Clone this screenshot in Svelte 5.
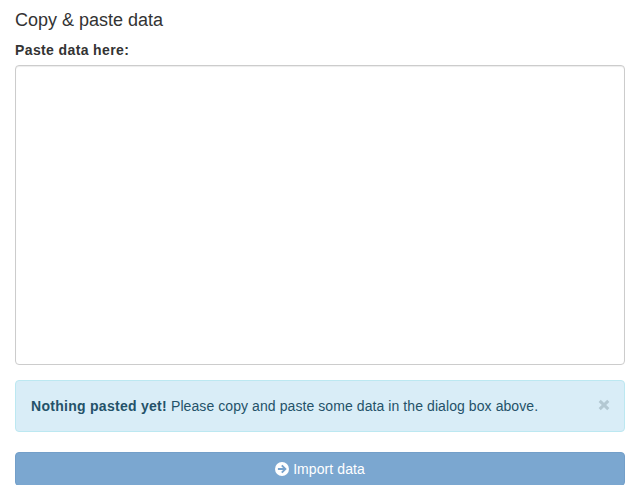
<script>
  let text = $state('');
  let alertOpen = $state(true);
</script>

<main>
  <h4>Copy &amp; paste data</h4>
  <label for="paste">Paste data here:</label>
  <textarea id="paste" bind:value={text}></textarea>

  {#if alertOpen}
    <div class="alert" role="alert">
      <p><strong>Nothing pasted yet!</strong> Please copy and paste some data in the dialog box above.</p>
      <button class="close" type="button" aria-label="Close" onclick={() => (alertOpen = false)}>
        <svg width="12" height="12" viewBox="0 0 12 12" aria-hidden="true">
          <path d="M1.7 1.9 L10.3 10.1 M10.3 1.9 L1.7 10.1" fill="none" stroke="currentColor" stroke-width="3" />
        </svg>
      </button>
    </div>
  {/if}

  <button class="import" type="button" disabled={!text}>
    <svg width="14" height="14" viewBox="0 0 14 14" aria-hidden="true">
      <circle cx="7" cy="7" r="7" fill="#fff" />
      <path d="M2.9 7 H10 M6.8 3.4 L10.4 7 L6.8 10.6" fill="none" stroke="#77a3cd" stroke-width="1.9" />
    </svg>
    <span>Import data</span>
  </button>
</main>

<style>
  :global(body) {
    margin: 0;
    background: #fff;
    overflow: hidden;
  }
  main {
    box-sizing: border-box;
    height: 485px;
    overflow: hidden;
    padding: 10px 15px 0;
    display: flex;
    flex-direction: column;
    font: 14px/20px "Liberation Sans", Arial, sans-serif;
    color: #333;
  }
  h4 {
    margin: 0 0 10px;
    font-size: 18px;
    font-weight: 400;
    line-height: 20px;
  }
  label {
    margin-bottom: 5px;
    font-weight: 700;
    letter-spacing: 0.38px;
  }
  textarea {
    box-sizing: border-box;
    flex: none;
    width: 100%;
    height: 300px;
    margin: 0 0 15px;
    padding: 6px 12px;
    border: 1px solid #ccc;
    border-radius: 4px;
    box-shadow: inset 0 1px 1px rgba(0, 0, 0, 0.075);
    font: inherit;
    color: #555;
    resize: none;
    outline: none;
  }
  .alert {
    box-sizing: border-box;
    flex: none;
    height: 52px;
    display: flex;
    justify-content: space-between;
    margin-bottom: 20px;
    padding: 15px;
    border: 1px solid #bce8f1;
    border-radius: 4px;
    background: #d9edf7;
    color: #245269;
  }
  p {
    margin: 0;
    letter-spacing: 0.08px;
  }
  strong {
    letter-spacing: 0.28px;
  }
  .close {
    display: flex;
    width: 12px;
    height: 12px;
    margin: 3px -1px 0 0;
    padding: 0;
    border: 0;
    background: none;
    color: #b3c8d2;
  }
  .import {
    box-sizing: border-box;
    flex: none;
    height: 34px;
    display: flex;
    align-items: center;
    justify-content: center;
    gap: 4px;
    padding: 0;
    border: 1px solid #739fc9;
    border-radius: 4px;
    background: #7ba7d0;
    color: #fff;
    font: inherit;
    letter-spacing: 0.08px;
  }
</style>
